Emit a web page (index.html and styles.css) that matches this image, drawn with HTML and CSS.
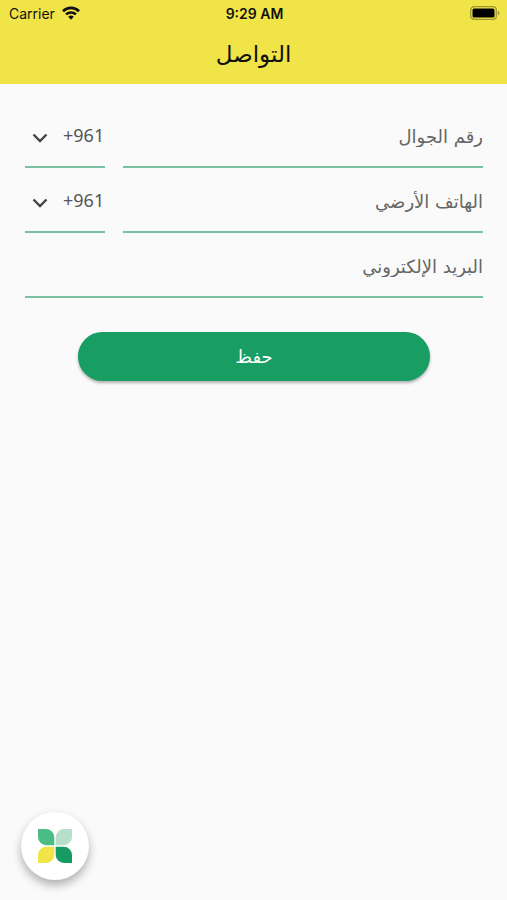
FILE: index.html
```html
<!DOCTYPE html>
<html lang="ar" dir="rtl">
<head>
    <meta charset="UTF-8">
    <meta name="viewport" content="width=device-width, initial-scale=1.0">
    <title>التواصل</title>
    <link rel="stylesheet" href="styles.css">
</head>
<body>
    <header class="top-bar">
        <div class="status-bar" dir="ltr">
            <div class="carrier">
                <span>Carrier</span>
                <svg class="wifi" viewBox="0 0 18 14" aria-hidden="true">
                    <path d="M1 5.2a11.5 11.5 0 0 1 16 0" fill="none" stroke="#111" stroke-width="2.7"/>
                    <path d="M4 8.4a7.2 7.2 0 0 1 10 0" fill="none" stroke="#111" stroke-width="2.5"/>
                    <path d="M6.2 10.8a4 4 0 0 1 5.6 0L9 13.7z" fill="#111"/>
                </svg>
            </div>
            <span class="time">9:29 AM</span>
            <svg class="battery" viewBox="0 0 30 14" aria-hidden="true">
                <rect x="0.7" y="0.7" width="25.6" height="12.6" rx="3.4" fill="none" stroke="#9f9730" stroke-width="1.3"/>
                <rect x="2.5" y="2.5" width="22" height="9" rx="1.6" fill="#000"/>
                <path d="M27.8 4.7c2.2 1 2.2 3.6 0 4.6z" fill="#9f9730"/>
            </svg>
        </div>
        <h1>التواصل</h1>
    </header>

    <main>
        <form class="contact-form">
            <div class="form-row">
                <input class="field" type="tel" id="mobile" dir="rtl" placeholder="رقم الجوال" aria-label="رقم الجوال">
                <div class="code" dir="ltr">
                    <svg class="chevron" viewBox="0 0 16 10" aria-hidden="true">
                        <path d="M1.5 1.5L8 8l6.500-6.500" fill="none" stroke="#444" stroke-width="2.4"/>
                    </svg>
                    <select aria-label="رمز الدولة للجوال">
                        <option>+961</option>
                    </select>
                </div>
            </div>
            <div class="form-row">
                <input class="field" type="tel" id="landline" dir="rtl" placeholder="الهاتف الأرضي" aria-label="الهاتف الأرضي">
                <div class="code" dir="ltr">
                    <svg class="chevron" viewBox="0 0 16 10" aria-hidden="true">
                        <path d="M1.5 1.5L8 8l6.500-6.500" fill="none" stroke="#444" stroke-width="2.4"/>
                    </svg>
                    <select aria-label="رمز الدولة للهاتف الأرضي">
                        <option>+961</option>
                    </select>
                </div>
            </div>
            <div class="form-row">
                <input class="field" type="email" id="email" dir="rtl" placeholder="البريد الإلكتروني" aria-label="البريد الإلكتروني">
            </div>
            <button class="save-button" type="button">حفظ</button>
        </form>
    </main>

    <button class="menu-button" type="button" aria-label="القائمة">
        <svg viewBox="0 0 34 34" aria-hidden="true">
            <path d="M0 0h8a8.300 8.300 0 0 1 8.300 8.300v8h-8A8.300 8.300 0 0 1 0 8z" fill="#4cbc85"/>
            <path d="M34 0v8a8.300 8.300 0 0 1-8.300 8.300h-8v-8A8.300 8.300 0 0 1 26 0z" fill="#b7dfcc"/>
            <path d="M16.300 17.700v8A8.300 8.300 0 0 1 8 34H0v-8a8.300 8.300 0 0 1 8.300-8.300z" fill="#f0e446"/>
            <path d="M17.700 17.700h8A8.300 8.300 0 0 1 34 26v8h-8a8.300 8.300 0 0 1-8.300-8.300z" fill="#169c62"/>
        </svg>
    </button>
</body>
</html>
```
FILE: styles.css
```css
* {
    box-sizing: border-box;
}
body {
    font-family: "DejaVu Sans", sans-serif;
    background-color: #fafafa;
    margin: 0;
    min-height: 100vh;
}
.top-bar {
    background-color: #f0e448;
    height: 84px;
    color: #111;
}
.status-bar {
    display: grid;
    grid-template-columns: 1fr auto 1fr;
    align-items: center;
    height: 26px;
    padding: 0 7px 0 9px;
    font-family: Inter, sans-serif;
    font-size: 14px;
}
.carrier {
    display: flex;
    align-items: center;
    gap: 7px;
}
.wifi {
    width: 18px;
    height: 14px;
}
.time {
    font-weight: 600;
}
.battery {
    width: 30px;
    height: 14px;
    justify-self: end;
}
h1 {
    margin: 0;
    font-size: 23px;
    font-weight: normal;
    line-height: 56px;
    text-align: center;
}
.contact-form {
    display: flex;
    flex-direction: column;
    padding: 19px 24px 20px 25px;
}
.form-row {
    display: flex;
    gap: 18px;
    height: 65px;
}
.field,
.code {
    height: 100%;
    border: none;
    border-bottom: 2px solid #78c2a1;
}
.field {
    flex: 1;
    min-width: 0;
    padding: 3px 0 0;
    border-radius: 0;
    background: none;
    color: #555;
    font-family: inherit;
    font-size: 18px;
    outline: none;
}
.field::placeholder {
    color: #666;
    opacity: 1;
}
.code {
    position: relative;
    width: 80px;
}
.code select {
    width: 100%;
    height: 100%;
    padding: 0 0 0 38px;
    border: none;
    background: none;
    appearance: none;
    color: #555;
    font-family: "Noto Sans", sans-serif;
    font-size: 18px;
}
/* arrow drawn over the select */
.chevron {
    position: absolute;
    left: 7px;
    top: 30px;
    width: 16px;
    height: 10px;
    pointer-events: none;
}
.save-button {
    align-self: center;
    width: 77%;
    height: 49px;
    margin-top: 34px;
    border: none;
    border-radius: 25px;
    background-color: #189d62;
    box-shadow: 0 2px 3px rgba(0, 0, 0, 0.3);
    color: white;
    font-family: inherit;
    font-size: 18px;
    cursor: pointer;
}
.menu-button {
    position: fixed;
    left: 21px;
    bottom: 20px;
    display: flex;
    align-items: center;
    justify-content: center;
    width: 68px;
    height: 68px;
    padding: 0;
    border: none;
    border-radius: 50%;
    background-color: white;
    box-shadow: 0 5px 10px rgba(0, 0, 0, 0.3);
    cursor: pointer;
}
.menu-button svg {
    width: 34px;
    height: 34px;
}
```
